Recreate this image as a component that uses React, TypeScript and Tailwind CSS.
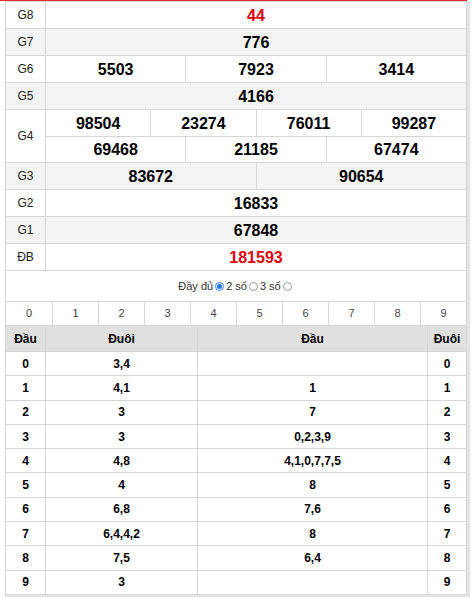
const font = { fontFamily: '"Liberation Sans", Arial, sans-serif' };

type Prize = { label: string; rows: string[][]; red?: boolean; shade?: boolean };

const prizes: Prize[] = [
  { label: "G8", rows: [["44"]], red: true },
  { label: "G7", rows: [["776"]], shade: true },
  { label: "G6", rows: [["5503", "7923", "3414"]] },
  { label: "G5", rows: [["4166"]], shade: true },
  { label: "G4", rows: [["98504", "23274", "76011", "99287"], ["69468", "21185", "67474"]] },
  { label: "G3", rows: [["83672", "90654"]], shade: true },
  { label: "G2", rows: [["16833"]] },
  { label: "G1", rows: [["67848"]], shade: true },
  { label: "ĐB", rows: [["181593"]], red: true },
];

const dauDuoi = [
  ["0", "3,4", "", "0"],
  ["1", "4,1", "1", "1"],
  ["2", "3", "7", "2"],
  ["3", "3", "0,2,3,9", "3"],
  ["4", "4,8", "4,1,0,7,7,5", "4"],
  ["5", "4", "8", "5"],
  ["6", "6,8", "7,6", "6"],
  ["7", "6,4,4,2", "8", "7"],
  ["8", "7,5", "6,4", "8"],
  ["9", "3", "", "9"],
];

function Radio({ checked }: { checked?: boolean }) {
  return checked ? (
    <span className="mx-[2px] inline-block h-[9px] w-[9px] rounded-full border border-[#3b82f6] bg-white p-[1px] align-[-1px]">
      <span className="block h-full w-full rounded-full bg-[#1e7ae6]" />
    </span>
  ) : (
    <span className="mx-[2px] inline-block h-[9px] w-[9px] rounded-full border border-[#999] bg-white align-[-1px]" />
  );
}

export default function App() {
  return (
    <div className="w-[472px] bg-white" style={font}>
      <div className="h-[1px] w-[467px] bg-[#e8262c]" />
      <div className="ml-[5px] w-[465px] border-r-[3px] border-b-[2px] border-[#e4e4e4]">
        <div className="w-[462px] border-x border-t border-[#d6d6d6]">
          {prizes.map((p) => (
            <div
              key={p.label}
              className={`flex border-b border-[#d6d6d6] ${p.shade ? "bg-[#f4f4f4]" : "bg-white"}`}
            >
              <div className="flex w-[40px] shrink-0 items-center justify-center border-r border-[#d6d6d6] text-[12px] text-[#222]">
                {p.label}
              </div>
              <div className="flex flex-1 flex-col">
                {p.rows.map((r, i) => (
                  <div key={i} className={`flex h-[26px] ${i > 0 ? "border-t border-[#d6d6d6]" : ""}`}>
                    {r.map((n, j) => (
                      <div
                        key={j}
                        className={`flex flex-1 items-center justify-center pt-[1px] text-[16px] font-bold ${
                          j > 0 ? "border-l border-[#d6d6d6]" : ""
                        } ${p.red ? "text-[#e3000f]" : "text-black"}`}
                      >
                        {n}
                      </div>
                    ))}
                  </div>
                ))}
              </div>
            </div>
          ))}

          <div className="flex h-[30px] items-center justify-center pt-[1px] text-[11px] text-[#333]">
            <span>Đầy đủ</span>
            <Radio checked />
            <span>2 số</span>
            <Radio />
            <span>3 số</span>
            <Radio />
          </div>

          <div className="grid grid-cols-10 border-t border-[#d6d6d6]">
            {Array.from({ length: 10 }, (_, i) => (
              <div
                key={i}
                className={`flex h-[23px] items-center justify-center text-[11px] text-[#444] ${
                  i > 0 ? "border-l border-[#d6d6d6]" : ""
                }`}
              >
                {i}
              </div>
            ))}
          </div>

          <div className="flex h-[27px] border-y border-[#d6d6d6] bg-[#e0e0e0] text-[12px] font-bold text-black">
            <div className="flex w-[40px] items-center justify-center border-r border-[#d6d6d6]">Đầu</div>
            <div className="flex w-[152px] items-center justify-center border-r border-[#d6d6d6]">Đuôi</div>
            <div className="flex w-[230px] items-center justify-center border-r border-[#d6d6d6]">Đầu</div>
            <div className="flex flex-1 items-center justify-center">Đuôi</div>
          </div>

          {dauDuoi.map((r) => (
            <div key={r[0]} className="flex h-[24.3px] border-b border-[#d6d6d6] text-[12px] font-bold text-black">
              <div className="flex w-[40px] items-center justify-center border-r border-[#d6d6d6]">{r[0]}</div>
              <div className="flex w-[152px] items-center justify-center border-r border-[#d6d6d6]">{r[1]}</div>
              <div className="flex w-[230px] items-center justify-center border-r border-[#d6d6d6]">{r[2]}</div>
              <div className="flex flex-1 items-center justify-center">{r[3]}</div>
            </div>
          ))}
        </div>
      </div>
    </div>
  );
}
